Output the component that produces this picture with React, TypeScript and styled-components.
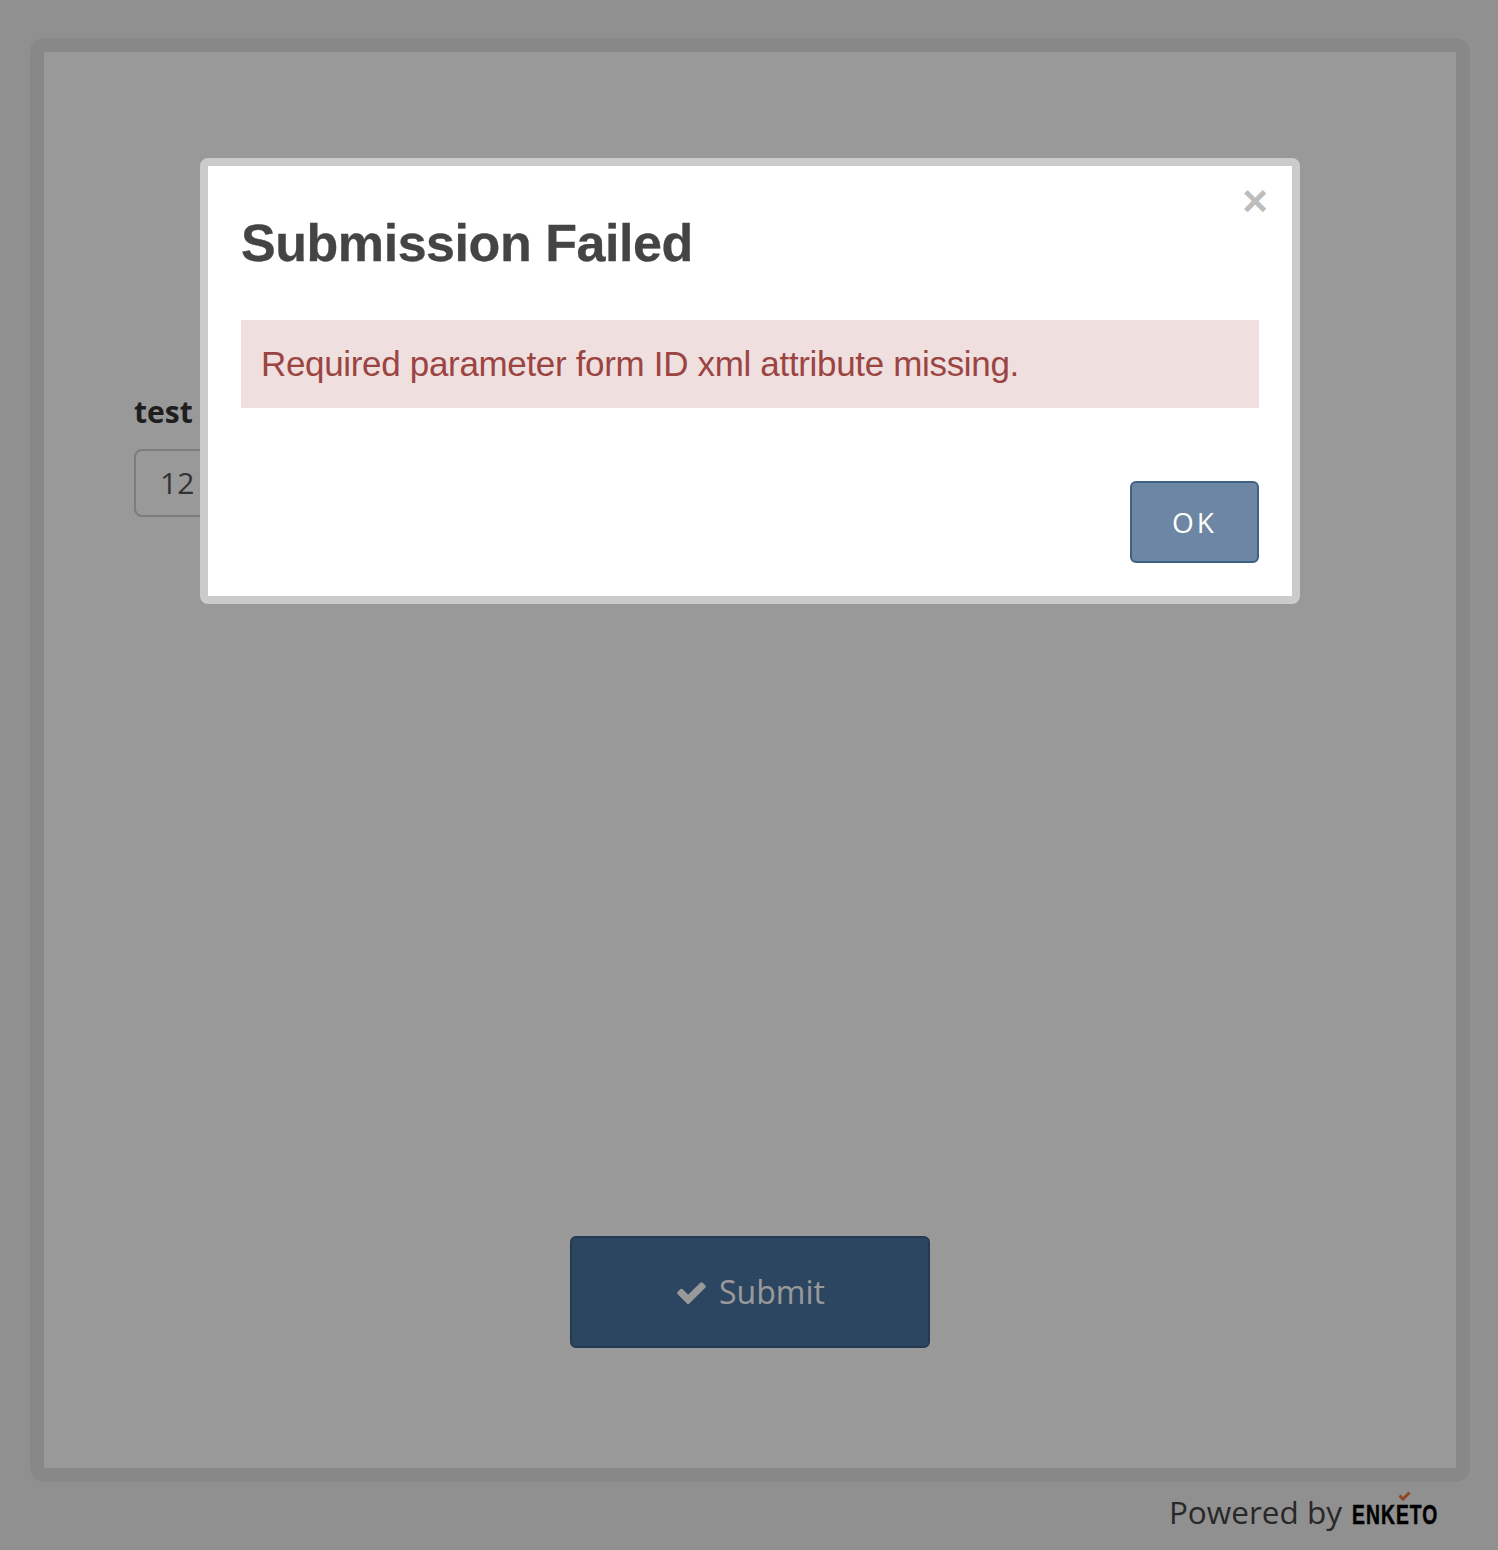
import React from "react";
import styled, { createGlobalStyle } from "styled-components";

const GlobalStyle = createGlobalStyle`
  html, body {
    margin: 0;
    padding: 0;
    background: #f0f0f0;
    font-family: "Open Sans", "Liberation Sans", sans-serif;
  }
`;

const Page = styled.div`
  width: 1498px;
  height: 1550px;
  box-sizing: border-box;
  padding: 38px 28px 0 30px;
  overflow: hidden;
`;

const FormFrame = styled.div`
  box-sizing: border-box;
  height: 1444px;
  background: #fff;
  border: 14px solid #e3e3e3;
  border-radius: 14px;
  padding: 341px 90px 120px;
  display: flex;
  flex-direction: column;
`;

const Label = styled.label`
  font-size: 30px;
  line-height: 38px;
  font-weight: 700;
  color: #333;
`;

const NumberInput = styled.div`
  box-sizing: border-box;
  width: 400px;
  height: 68px;
  margin-top: 18px;
  padding: 0 24px;
  border: 2px solid #cfcfcf;
  border-radius: 8px;
  font-size: 30px;
  line-height: 63px;
  color: #555;
`;

const SubmitButton = styled.button`
  box-sizing: border-box;
  align-self: center;
  width: 360px;
  height: 112px;
  margin-top: auto;
  padding: 0 0 2px 0;
  display: flex;
  align-items: center;
  justify-content: center;
  gap: 11px;
  background: #4a73a0;
  border: 2px solid #3e6188;
  border-radius: 6px;
  color: #fff;
  font-family: inherit;
  font-size: 32px;
`;

const CheckIcon = styled.svg`
  width: 33px;
  height: 33px;
  fill: currentColor;
  margin-top: 2px;
`;

const Footer = styled.footer`
  display: flex;
  justify-content: flex-end;
  align-items: baseline;
  gap: 10px;
  padding: 9px 32px 0 0;
  font-size: 31.5px;
  line-height: 41px;
  color: #444;
`;

const Logo = styled.span`
  position: relative;
  display: inline-block;
  width: 86px;
`;

const LogoWord = styled.span`
  display: inline-block;
  font-family: "Liberation Sans", sans-serif;
  font-weight: 700;
  font-size: 28px;
  letter-spacing: 1.5px;
  color: #000;
  -webkit-text-stroke: 0.5px #000;
  transform: scaleX(0.69);
  transform-origin: left center;
`;

const LogoTick = styled.svg`
  position: absolute;
  left: 46px;
  top: 0;
  width: 13px;
  height: 10px;
`;

const Overlay = styled.div`
  position: fixed;
  inset: 0;
  background: rgba(0, 0, 0, 0.4);
`;

const Dialog = styled.div`
  position: fixed;
  left: 200px;
  top: 158px;
  box-sizing: border-box;
  width: 1100px;
  height: 446px;
  padding: 44px 33px 33px;
  display: flex;
  flex-direction: column;
  background: #fff;
  background-clip: padding-box;
  border: 8px solid #cbcbcb;
  border-radius: 8px;
  font-family: "Liberation Sans", Arial, sans-serif;
`;

const CloseButton = styled.span`
  position: absolute;
  right: 24px;
  top: 13px;
  font-size: 44px;
  line-height: 44px;
  font-weight: 700;
  color: #bdbdbd;
`;

const Title = styled.h3`
  margin: 0;
  font-size: 52px;
  line-height: 66px;
  font-weight: 700;
  letter-spacing: -0.45px;
  -webkit-text-stroke: 0.3px #444;
  color: #444;
`;

const Alert = styled.div`
  box-sizing: border-box;
  height: 88px;
  margin-top: 44px;
  padding: 0 20px;
  background: #f0dfdf;
  color: #9b4543;
  font-size: 35px;
  letter-spacing: -0.33px;
  line-height: 88px;
`;

const DialogActions = styled.div`
  margin-top: auto;
  display: flex;
  justify-content: flex-end;
`;

const OkButton = styled.button`
  box-sizing: border-box;
  width: 129px;
  height: 82px;
  background: #6c86a3;
  border: 2px solid #3f6184;
  border-radius: 6px;
  color: #fff;
  font-family: "Open Sans", sans-serif;
  font-size: 28px;
  letter-spacing: 3px;
`;

export default function App() {
  return (
    <>
      <GlobalStyle />
      <Page>
        <FormFrame>
          <Label>test</Label>
          <NumberInput>12</NumberInput>
          <SubmitButton>
            <CheckIcon viewBox="0 0 1792 1792">
              <path d="M1671 566q0 40-28 68l-724 724-136 136q-28 28-68 28t-68-28l-136-136-362-362q-28-28-28-68t28-68l136-136q28-28 68-28t68 28l294 295 656-657q28-28 68-28t68 28l136 136q28 28 28 68z" />
            </CheckIcon>
            Submit
          </SubmitButton>
        </FormFrame>
        <Footer>
          Powered by
          <Logo>
            <LogoWord>ENKETO</LogoWord>
            <LogoTick viewBox="0 0 13 10">
              <path d="M1.5 4.5 L5 8 L11.5 1.5" fill="none" stroke="#f0703f" strokeWidth="3" />
            </LogoTick>
          </Logo>
        </Footer>
      </Page>
      <Overlay />
      <Dialog>
        <CloseButton>×</CloseButton>
        <Title>Submission Failed</Title>
        <Alert>Required parameter form ID xml attribute missing.</Alert>
        <DialogActions>
          <OkButton>OK</OkButton>
        </DialogActions>
      </Dialog>
    </>
  );
}
